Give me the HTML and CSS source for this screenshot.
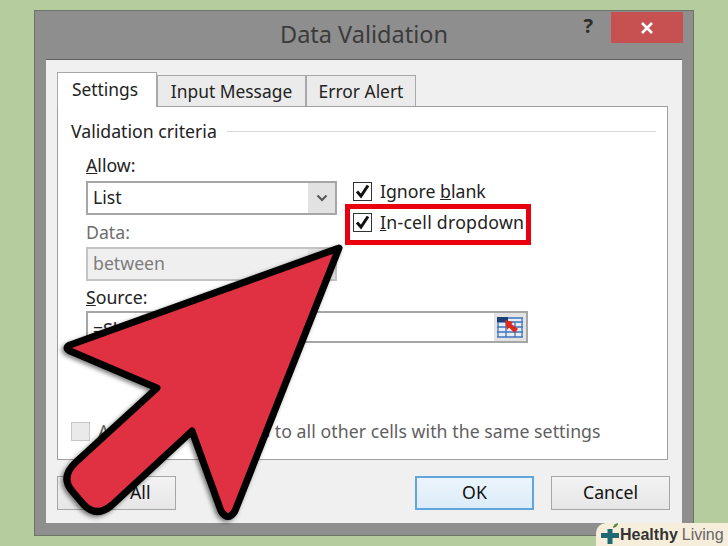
FILE: index.html
```html
<!DOCTYPE html>
<html lang="en">
<head>
	<meta charset="utf-8">
	<title>Data Validation</title>
	<link rel="stylesheet" href="styles.css">
</head>
<body>
	<div class="window">
		<div class="titlebar">
			<div class="title">Data Validation</div>
			<div class="title-controls">
				<span class="help">?</span>
				<span class="close">
					<svg width="14" height="14" viewBox="0 0 14 14"><path d="M2 2L12 12M12 2L2 12" stroke="#fff" stroke-width="2.6" fill="none"/></svg>
				</span>
			</div>
		</div>
		<div class="panel">
			<div class="tabs">
				<div class="tab tab-active">Settings</div>
				<div class="tab tab-input">Input Message</div>
				<div class="tab tab-error">Error Alert</div>
			</div>
			<div class="tab-panel">
				<div class="group-title">
					<span>Validation criteria</span>
					<div class="group-line"></div>
				</div>
				<div class="criteria">
					<div class="fields">
						<div class="field-label"><u>A</u>llow:</div>
						<div class="select">
							<span class="select-text">List</span>
							<span class="select-btn">
								<svg width="12" height="8" viewBox="0 0 12 8"><path d="M1.5 1.5L6 6L10.5 1.5" stroke="#555" stroke-width="2" fill="none"/></svg>
							</span>
						</div>
						<div class="field-label label-disabled">Data:</div>
						<div class="select select-disabled">
							<span class="select-text">between</span>
							<span class="select-btn"></span>
						</div>
					</div>
					<div class="checks">
						<div class="check-row">
							<span class="check">
								<svg width="17" height="17" viewBox="0 0 17 17"><path d="M3 8.5L7 13L14 2.5" stroke="#111" stroke-width="3" fill="none"/></svg>
							</span>
							<span>Ignore <u>b</u>lank</span>
						</div>
						<div class="check-row check-row-marked">
							<span class="check">
								<svg width="17" height="17" viewBox="0 0 17 17"><path d="M3 8.5L7 13L14 2.5" stroke="#111" stroke-width="3" fill="none"/></svg>
							</span>
							<span><u>I</u>n-cell dropdown</span>
						</div>
						<div class="highlight"></div>
					</div>
				</div>
				<div class="field-label source-label"><u>S</u>ource:</div>
				<div class="source">
					<span class="select-text source-text">=Sheet2</span>
					<span class="ref-btn">
						<svg width="26" height="21" viewBox="0 0 26 21">
							<rect x="0" y="0" width="26" height="21" fill="#e6ebf4"/>
							<path d="M0 1H26M0 5H26M0 10H26M0 15H26M0 20H26M1 1V20M9 5V20M18 5V20M25 1V20" stroke="#3f74bd" stroke-width="1.3" fill="none"/>
							<rect x="0" y="0" width="11" height="5" fill="#1d3f78"/>
							<path d="M8 3L16 5L14.500 7L21 12L17.500 16L12 10.500L10 13Z" fill="#dd2a1c"/>
						</svg>
					</span>
				</div>
				<div class="apply-row">
					<span class="check check-disabled"></span>
					<span>Apply these changes to all other cells with the same settings</span>
				</div>
			</div>
			<div class="buttons">
				<button class="btn">Clear All</button>
				<button class="btn btn-default">OK</button>
				<button class="btn">Cancel</button>
			</div>
		</div>
	</div>

	<svg class="arrow" width="728" height="546" viewBox="0 0 728 546">
		<path d="M339 248L70 345Q64 348 70 351L157 388L76 462Q60 477 72 491L84 505Q97 518 112 505L192 431L221 511Q228 522 235 511Z" fill="#e03143" stroke="#000" stroke-width="7" stroke-linejoin="round"/>
	</svg>

	<div class="badge">
		<svg class="badge-logo" width="20" height="22" viewBox="0 0 20 22">
			<path d="M1 12.500H19M10 6V21" stroke="#1f6a70" stroke-width="5" fill="none"/>
			<path d="M13 5Q13 1 18 0Q18 4 13 5Z" fill="#4f8a3a"/>
		</svg>
		<span class="badge-name">Healthy</span>
		<span class="badge-living">Living</span>
	</div>
</body>
</html>
```

FILE: styles.css
```css
body {
	margin: 0;
	padding: 10px 0 0 34px;
	height: 546px;
	box-sizing: border-box;
	overflow: hidden;
	background: #b5cc9e;
	font-family: "Noto Sans", sans-serif;
	font-size: 17.7px;
	color: #222;
}

.window {
	width: 660px;
	height: 526px;
	box-sizing: border-box;
	border: 1px solid #6d7568;
	background: #8e8e8e;
}

.titlebar {
	display: grid;
	grid-template-columns: 1fr auto 1fr;
	height: 48px;
}

.title {
	grid-column: 2;
	font-size: 23.5px;
	line-height: 46px;
	color: #3b3b3b;
}

.title-controls {
	display: flex;
	justify-content: flex-end;
	align-items: flex-start;
	padding-right: 10px;
}

.help {
	margin-right: 18px;
	font-size: 20px;
	font-weight: bold;
	line-height: 30px;
	color: #2c2c2c;
}

.close {
	display: flex;
	align-items: center;
	justify-content: center;
	width: 72px;
	height: 31px;
	margin-top: 1px;
	background: #c75050;
}

.panel {
	height: 464px;
	margin: 0 11px;
	padding: 13px 12px 0 11px;
	box-sizing: border-box;
	border-top: 1px solid #5f5f5f;
	background: #f0f0f0;
}

.tabs {
	display: flex;
	align-items: flex-end;
	height: 33px;
}

.tab {
	position: relative;
	height: 31px;
	box-sizing: border-box;
	border: 1px solid #a8a8a8;
	border-bottom: 0;
	background: #ebebeb;
	font-size: 17.4px;
	line-height: 31px;
	text-align: center;
}

.tab-active {
	z-index: 1;
	width: 100px;
	height: 35px;
	margin-bottom: -1px;
	padding-right: 4px;
	background: #fff;
	line-height: 33px;
}

.tab-input {
	width: 149px;
}

.tab-error {
	width: 110px;
}

.tab-panel {
	display: flex;
	flex-direction: column;
	height: 354px;
	margin-right: 2px;
	padding: 0 11px 16px 13px;
	box-sizing: border-box;
	border: 1px solid #a0a0a0;
	background: #fff;
}

.group-title {
	display: flex;
	align-items: center;
	gap: 10px;
	height: 24px;
	margin-top: 12px;
}

.group-line {
	flex: 1;
	height: 1px;
	background: #d8d8d8;
}

.criteria {
	display: flex;
	margin-top: 14px;
	margin-left: 15px;
}

.fields {
	width: 251px;
}

.field-label {
	height: 24px;
	line-height: 16px;
}

.label-disabled {
	margin-top: 4px;
	height: 28px;
	line-height: 26px;
	color: #6e6e6e;
}

.select {
	display: flex;
	height: 34px;
	box-sizing: border-box;
	border: 2px solid #a6a6a6;
	background: #fff;
}

.select-text {
	flex: 1;
	padding-left: 5px;
	line-height: 28px;
}

.select-btn {
	display: flex;
	align-items: center;
	justify-content: center;
	width: 27px;
	background: #e2e2e2;
}

.select-disabled {
	border-color: #c4c4c4;
	background: #efefef;
	color: #7d7d7d;
}

.checks {
	position: relative;
	margin-left: 16px;
	padding-top: 19px;
}

.check-row {
	display: flex;
	align-items: center;
	gap: 8px;
	height: 30px;
	white-space: nowrap;
}

.check-row-marked {
	height: 32px;
	letter-spacing: 0.25px;
}

.check {
	display: flex;
	align-items: center;
	justify-content: center;
	width: 19px;
	height: 19px;
	box-sizing: border-box;
	border: 1px solid #333;
	background: #fff;
}

.highlight {
	position: absolute;
	left: -8px;
	top: 47px;
	width: 186px;
	height: 41px;
	box-sizing: border-box;
	border: 5px solid #e8000e;
}

.source-label {
	margin-top: 6px;
	margin-left: 15px;
	line-height: 20px;
}

.source {
	display: flex;
	height: 32px;
	width: 442px;
	margin-left: 15px;
	box-sizing: border-box;
	border: 2px solid #a6a6a6;
}

.source-text {
	line-height: 32px;
}

.ref-btn {
	display: flex;
	align-items: center;
	justify-content: center;
	width: 32px;
	background: #e3e3e3;
}

.apply-row {
	display: flex;
	align-items: center;
	gap: 8px;
	margin-top: auto;
	color: #5f5f5f;
	letter-spacing: 0.05px;
	white-space: nowrap;
}

.check-disabled {
	border-color: #c6c6c6;
	background: #eaeaea;
}

.buttons {
	display: flex;
	margin-top: 16px;
}

.btn {
	width: 119px;
	height: 34px;
	padding: 0 0 2px;
	border: 1px solid #a6a6a6;
	background: linear-gradient(#f3f3f3, #e6e6e6);
	font-family: inherit;
	font-size: 17.7px;
	color: #111;
}

.btn:first-child {
	margin-right: auto;
}

.btn:last-child {
	margin-left: 17px;
}

.btn-default {
	border: 2px solid #5ea6dd;
	background: linear-gradient(#ecf4fb, #dcecf9);
}

.arrow {
	position: absolute;
	left: 0;
	top: 0;
	filter: drop-shadow(-2px 2px 2px rgba(0, 0, 0, 0.5));
}

.badge {
	position: absolute;
	right: 0;
	bottom: 0;
	display: flex;
	align-items: center;
	width: 132px;
	height: 23px;
	padding-left: 4px;
	box-sizing: border-box;
	border-top-left-radius: 10px;
	background: #f6eeda;
	font-family: "Liberation Sans", sans-serif;
	font-size: 16px;
	white-space: nowrap;
}

.badge-logo {
	flex: none;
	margin-top: -2px;
}

.badge-name {
	font-weight: bold;
	color: #333;
}

.badge-living {
	margin-left: 4px;
	color: #666;
}
```
